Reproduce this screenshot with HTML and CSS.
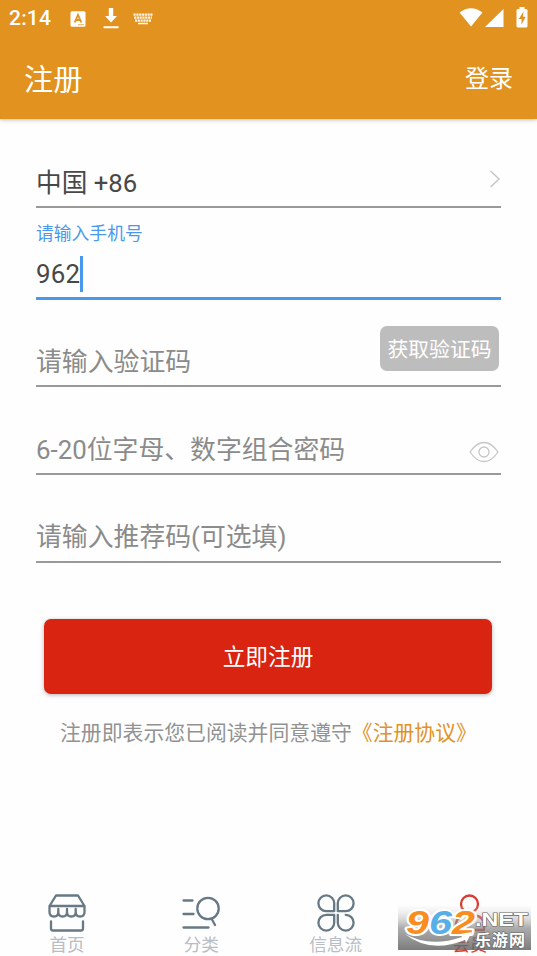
FILE: index.html
```html
<!DOCTYPE html>
<html lang="zh-CN">
<head>
<meta charset="utf-8">
<title>注册</title>
<link rel="stylesheet" href="styles.css">
</head>
<body>
<header class="top">
  <div class="status">
    <span class="time">2:14</span>
    <svg class="ic-a" width="16" height="16" viewBox="0 0 16 16"><rect x=".5" y=".3" width="15" height="15.4" rx="1.5" fill="#fff"/><path d="M4.700 11.500 8 3.800l3.300 7.700M6 9h4" fill="none" stroke="#e2921e" stroke-width="1.800"/><path d="M8 13.700h6" stroke="#e2921e" stroke-width=".7"/></svg>
    <svg class="ic-down" width="16" height="21" viewBox="0 0 16 21"><path d="M5.800 0h4.400v8H14l-6 6.500L2 8h3.800zM.5 18.300h15v2H.5z" fill="#fff"/></svg>
    <svg class="ic-key" width="20" height="12" viewBox="0 0 20 12"><path d="M.5 1.700h19M1 4.700h18M2 7.600h16" stroke="#fff" stroke-width="2.300" stroke-dasharray="2.200 .6" opacity=".9"/><path d="M5 10.500h10" stroke="#fff" stroke-width="1.500"/></svg>
    <span class="spacer"></span>
    <svg class="ic-wifi" width="24" height="19" viewBox="0 0 24 19"><path d="M.5 4.500Q12-4 23.500 4.500L12 18.500z" fill="#fff"/></svg>
    <svg class="ic-cell" width="19" height="18" viewBox="0 0 19 18"><path d="M18.500 0v18H0z" fill="#fff"/></svg>
    <svg class="ic-bat" width="12" height="21" viewBox="0 0 12 21"><path d="M3.500 0h5v2H10.500l1 1v16.500l-1 1h-9l-1-1V3l1-1h2z" fill="#fff"/><path d="M7.500 4.500 2.800 12h2.700v5.500L9.700 9.700H7z" fill="#e2921e"/></svg>
  </div>
  <div class="bar"><h1>注册</h1><a class="login">登录</a></div>
</header>
<main class="form">
  <div class="field country"><span>中国 +86</span>
    <svg class="chev" width="12" height="18" viewBox="0 0 12 18"><path d="m1.500 1 8.500 8-8.500 8" fill="none" stroke="#c4c4c4" stroke-width="1.400"/></svg>
  </div>
  <div class="field phone"><label>请输入手机号</label><div class="value">962<i class="caret"></i></div></div>
  <div class="field code"><span>请输入验证码</span><button class="get">获取验证码</button></div>
  <div class="field pass"><span>6-20位字母、数字组合密码</span>
    <svg class="eye" width="30" height="22" viewBox="0 0 30 22"><path d="M1 11Q7.500 1.500 15 1.500T29 11Q22.500 20.500 15 20.500T1 11z" fill="none" stroke="#c6c6c6" stroke-width="1.300"/><circle cx="15" cy="11" r="5" fill="none" stroke="#c6c6c6" stroke-width="1.300"/></svg>
  </div>
  <div class="field"><span>请输入推荐码(可选填)</span></div>
  <button class="submit">立即注册</button>
  <p class="terms">注册即表示您已阅读并同意遵守<a>《注册协议》</a></p>
</main>
<nav class="tabs">
  <div class="tab"><svg width="38" height="38" viewBox="0 0 38 38"><path d="M8 1.500h22l6.500 10.500H1.500zM1.500 12v6q0 4.500 4.400 4.500t4.400-4.500v-3 3q0 4.500 4.350 4.500t4.350-4.500v-3 3q0 4.500 4.350 4.500t4.350-4.500v-3 3q0 4.500 4.400 4.500t4.400-4.500v-6M3 27.500v7q0 2 2 2h28q2 0 2-2v-7"/></svg><span>首页</span></div>
  <div class="tab"><svg width="38" height="38" viewBox="0 0 38 38"><path d="M1.500 6.500h9M1.500 20h10M1.500 33.500h25"/><circle cx="26" cy="14.500" r="10.700"/><path d="m30 25.500 3 5.500"/></svg><span>分类</span></div>
  <div class="tab"><svg width="38" height="38" viewBox="0 0 38 38"><path d="M17.200 17.200H9.300A7.900 7.900 0 1 1 17.200 9.300zM20.800 17.200V9.300a7.900 7.900 0 1 1 7.900 7.900zM17.200 20.800v7.900A7.900 7.900 0 1 1 9.300 20.800zM20.800 20.800v7.900A7.900 7.900 0 1 0 28.700 20.800"/></svg><span>信息流</span></div>
  <div class="tab active"><svg width="38" height="38" viewBox="0 0 38 38"><circle cx="18.500" cy="10" r="8.500"/><path d="M5 36v-5q0-10 14-10t14 10v5z"/></svg><span>会员</span></div>
</nav>
<div class="mark">
  <svg width="133" height="44" viewBox="0 0 133 44">
    <defs><linearGradient id="g" x1="0" y1="0" x2="0" y2="1"><stop offset="0" stop-color="#ddd" stop-opacity=".1"/><stop offset=".5" stop-color="#888" stop-opacity=".7"/><stop offset="1" stop-color="#606060" stop-opacity=".82"/></linearGradient></defs>
    <rect width="133" height="44" fill="url(#g)"/>
    <g class="logo" stroke-linejoin="round">
      <text x="8" y="27.500" font-size="34" textLength="69" lengthAdjust="spacingAndGlyphs" fill="#fff" stroke="#fff" stroke-width="4" aria-hidden="true"><tspan fill="#fa8d20" stroke="#fff" paint-order="stroke">9</tspan><tspan fill="#58aee8" paint-order="stroke">6</tspan><tspan fill="#fa8d20" paint-order="stroke">2</tspan></text>
    </g>
    <path d="M7 28Q32 42 64 31l-2-3 12-2-6 11-1-3Q32 48 7 28z" fill="#fff"/>
    <g stroke="#666" stroke-width="1.200" paint-order="stroke" fill="#fff">
      <text class="net" x="77" y="20" font-size="18" textLength="53" lengthAdjust="spacingAndGlyphs">.NET</text>
      <text class="cn" x="77" y="40" font-size="16" textLength="50">乐游网</text>
    </g>
  </svg>
</div>
</body>
</html>
```
FILE: styles.css
```css
* { box-sizing: border-box; }
body {
  margin: 0;
  width: 537px;
  height: 956px;
  position: relative;
  display: flex;
  flex-direction: column;
  overflow: hidden;
  background: #fefefe;
  color: #444;
  font-family: Roboto, "Noto Sans CJK SC", sans-serif;
}
button { border: 0; padding: 0; font-family: inherit; color: #fff; }
.top { height: 119px; background: #e2921e; color: #fff; box-shadow: 0 1px 4px rgba(0,0,0,.25); }
.status { height: 37px; display: flex; align-items: center; padding: 0 9px 0 9px; }
.time { width: 61px; font-size: 21px; font-weight: 500; letter-spacing: .2px; line-height: 37px; }
.ic-down { margin-left: 17px; }
.ic-key { margin-left: 14px; }
.spacer { flex: 1; }
.status .ic-wifi, .status .ic-cell, .status .ic-bat { margin-bottom: 2px; }
.ic-cell { margin-left: 2px; }
.ic-bat { margin-left: 12px; }
.bar { height: 82px; display: flex; justify-content: space-between; align-items: center; padding: 0 24px 3px 24px; }
h1 { margin: 0; font-size: 29.300px; font-weight: 400; }
.login { font-size: 24px; }
.form { flex: 1; padding: 37px 36px 0; }
.field {
  height: 88px;
  display: flex;
  align-items: flex-end;
  justify-content: space-between;
  padding-bottom: 5px;
  border-bottom: 2px solid #999;
  color: #8b8b8b;
  font-size: 25.850px;
  line-height: 38px;
}
.country { height: 52px; padding-bottom: 4px; color: #484848; font-size: 25.700px; }
.chev { margin: 0 0 14px; }
.phone { height: 92px; flex-direction: column; align-items: stretch; justify-content: flex-end; border-bottom: 3px solid #4a98ec; color: #484848; }
.phone label { color: #4a98ec; font-size: 17.800px; line-height: 26px; margin-bottom: 9px; }
.value { display: flex; align-items: center; height: 36px; letter-spacing: .2px; }
.caret { width: 3px; height: 36px; background: #4a98ec; }
.code { height: 87px; padding-bottom: 4px; }
.get { width: 119px; height: 45px; margin: 0 2px 10px 0; padding-top: 3px; border-radius: 7px; background: #bdbdbd; font-size: 20.800px; line-height: 42px; }
.pass { height: 87.500px; padding-bottom: 4px; }
.eye { margin: 0 2px 6px 0; }
.submit { display: block; width: 448px; height: 75px; margin: 56px 0 0 8px; padding-bottom: 1px; border-radius: 7px; background: #d82410; font-size: 22.700px; box-shadow: 0 1px 4px rgba(0,0,0,.3); }
.terms { margin: 23px 0 0 24px; font-size: 20.850px; line-height: 32px; white-space: nowrap; color: #929292; }
.terms a { color: #e2921e; }
.tabs { display: flex; height: 63px; }
.tab { flex: 1; display: flex; flex-direction: column; align-items: center; color: #b9bdc4; font-size: 17.600px; line-height: 26px; }
.tab svg { flex: none; margin-top: 1px; fill: none; stroke: #677985; stroke-width: 2.300; stroke-linecap: round; stroke-linejoin: round; }
.tab.active { color: #d83b30; }
.tab.active svg { stroke: #d83b30; }
.mark { position: absolute; left: 398px; top: 906px; width: 133px; height: 44px; }
.mark svg { display: block; overflow: visible; }
.logo { font-family: "Liberation Sans", sans-serif; font-weight: 700; font-style: italic; }
.net { font-family: "Liberation Sans", sans-serif; font-weight: 700; }
.cn { font-family: "Noto Sans CJK SC", sans-serif; font-weight: 700; }
```
